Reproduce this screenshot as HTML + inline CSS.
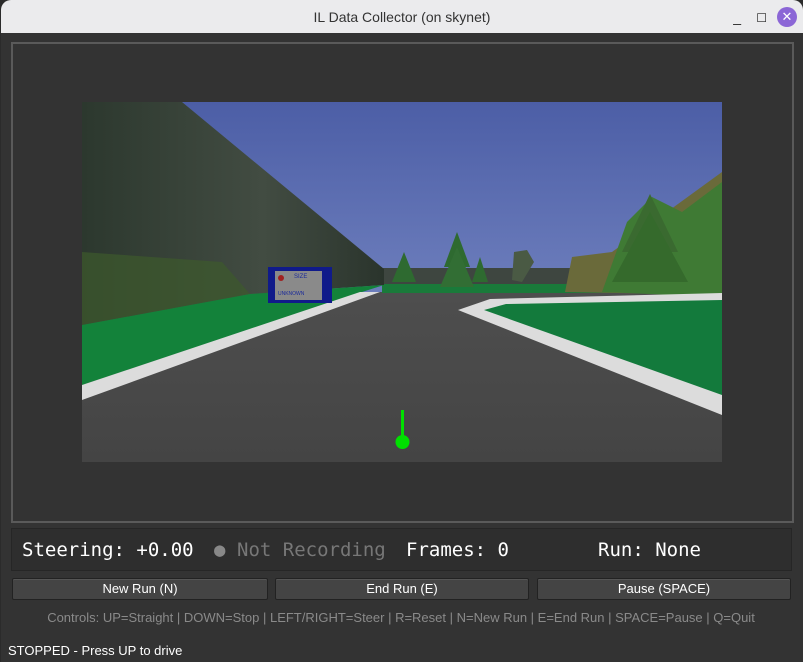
<!DOCTYPE html>
<html><head><style>
html,body{margin:0;padding:0;width:803px;height:662px;overflow:hidden;background:#2b2b2b;font-family:"Liberation Sans",sans-serif}
.win{position:absolute;left:1px;top:0;width:802px;height:662px;background:#333;border-radius:10px 10px 0 0;overflow:hidden}
.title{height:33px;background:#ebebed;text-align:center;line-height:34px;font-size:14px;color:#333;position:relative}
.ctl{position:absolute;top:0;font-size:14px;color:#222}
.close{position:absolute;right:6px;top:7px;width:20px;height:20px;border-radius:50%;background:#8b66d6;color:#fff;text-align:center;line-height:20px;font-size:13px}
.frame{position:absolute;left:10px;top:42px;width:779px;height:477px;border:2px solid #5a5a5a}
.scene{position:absolute;left:81px;top:102px;width:640px;height:360px}
.panel{position:absolute;left:10px;top:528px;width:779px;height:41px;background:#2e2e2e;border:1px solid #262626;font-family:"DejaVu Sans Mono","Liberation Mono",monospace;font-size:19px;color:#fff;line-height:42px}
.panel span{position:absolute;top:0}
.btn{position:absolute;top:578px;height:20px;background:#444;border:1px solid #222;border-radius:2px;color:#fff;font-size:13px;text-align:center;line-height:20px;box-shadow:inset 0 1px 0 #555}
.help{position:absolute;top:610px;left:0;width:800px;text-align:center;font-size:13px;color:#8a8a8a}
.status{position:absolute;top:643px;left:7px;font-size:13px;color:#fff}
</style></head><body>
<div class="win">
<div class="title">IL Data Collector (on skynet)
<span class="ctl" style="right:62px;">_</span>
<span class="ctl" style="right:36px;top:1px;font-size:12px">☐</span>
<div class="close">✕</div></div>
<div class="frame"></div>
<svg class="scene" viewBox="0 0 640 360" width="640" height="360">
<defs>
<linearGradient id="sky" x1="0" y1="0" x2="0" y2="1"><stop offset="0" stop-color="#4c5ea6"/><stop offset="1" stop-color="#8a9ad0"/></linearGradient>
<linearGradient id="road" x1="0" y1="0" x2="0" y2="1"><stop offset="0" stop-color="#4e4e4e"/><stop offset="1" stop-color="#444"/></linearGradient>
<linearGradient id="wall" x1="0" y1="0" x2="1" y2="0"><stop offset="0" stop-color="#2c382e"/><stop offset=".6" stop-color="#424c42"/><stop offset="1" stop-color="#2a342c"/></linearGradient>
</defs>
<rect width="640" height="360" fill="url(#sky)"/>
<rect x="0" y="190" width="640" height="170" fill="url(#road)"/>
<rect x="300" y="166" width="190" height="17" fill="#3e4640"/>
<rect x="300" y="182" width="340" height="9" fill="#1a7a3a"/>
<polygon points="0,0 100,0 302,167 302,183 168,192 0,223" fill="url(#wall)"/>
<polygon points="0,150 140,160 168,192 0,223" fill="#3d5a2c" opacity=".7"/>
<polygon points="0,223 168,192 302,183 280,190 0,283" fill="#13823a"/>
<polygon points="0,283 278,190 298,190 0,298" fill="#dcdcdc"/>
<polygon points="483,190 490,155 530,150 640,70 640,193" fill="#6a6a3a"/>
<polygon points="520,190 545,120 570,95 600,110 640,80 640,195" fill="#3f7a34"/>
<polygon points="568,92 540,150 596,150" fill="#3a6a30"/>
<polygon points="568,110 530,180 606,180" fill="#356a2c"/>
<polygon points="376,208 408,197 640,191 640,313" fill="#dcdcdc"/>
<polygon points="402,208 424,202 640,198 640,293" fill="#137a3c"/>
<polygon points="375,130 362,165 388,165" fill="#2e6a30"/>
<polygon points="375,145 358,185 392,185" fill="#326e34"/>
<polygon points="322,150 310,180 334,180" fill="#2e6a30"/>
<polygon points="398,155 390,180 406,180" fill="#2e6a30"/>
<polygon points="432,150 445,148 452,160 440,180 430,178" fill="#4a5a44"/>
<rect x="186" y="165" width="64" height="36" fill="#101a8a"/>
<rect x="193" y="169" width="47" height="29" fill="#8a8a8a"/>
<text x="212" y="176" font-size="6" fill="#1a2a9a" font-family="Liberation Sans">SIZE</text>
<text x="196" y="193" font-size="5" fill="#1a2a9a" font-family="Liberation Sans">UNKNOWN</text>
<circle cx="199" cy="176" r="3" fill="#a02020"/>
<rect x="319" y="308" width="3" height="32" fill="#00e000"/>
<circle cx="320.5" cy="340" r="7" fill="#00e000"/>
</svg>
<div class="panel">
<span style="left:10px">Steering: +0.00</span>
<span style="left:202px;color:#888">●</span>
<span style="left:225px;color:#777">Not Recording</span>
<span style="left:394px">Frames: 0</span>
<span style="left:586px">Run: None</span>
</div>
<div class="btn" style="left:11px;width:254px">New Run (N)</div>
<div class="btn" style="left:274px;width:252px">End Run (E)</div>
<div class="btn" style="left:536px;width:252px">Pause (SPACE)</div>
<div class="help">Controls: UP=Straight | DOWN=Stop | LEFT/RIGHT=Steer | R=Reset | N=New Run | E=End Run | SPACE=Pause | Q=Quit</div>
<div class="status">STOPPED - Press UP to drive</div>
</div>
</body></html>
